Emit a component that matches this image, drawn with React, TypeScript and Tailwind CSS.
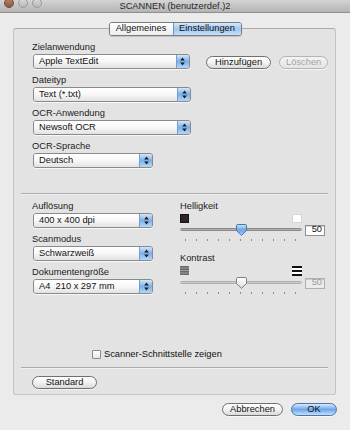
import React from "react";

function Arrows() {
	return (
		<svg width="5" height="9" viewBox="0 0 5 9" aria-hidden="true">
			<path d="M2.5 0.5 L4.8 3.4 L0.2 3.4 Z" fill="#1c1c1c" />
			<path d="M2.5 8.5 L4.8 5.6 L0.2 5.6 Z" fill="#1c1c1c" />
		</svg>
	);
}

function Popup({ value, className }: { value: string; className: string }) {
	return (
		<div
			className={`ml-[1px] flex h-[15px] overflow-hidden rounded-[3px] border border-[#8a8a8a] shadow-[0_1px_0_rgba(255,255,255,0.7)] ${className}`}
		>
			<div className="flex flex-1 items-center bg-gradient-to-b from-white via-[#f7f7f7] to-[#e2e2e2] pl-[5px] text-[#111]">
				{value}
			</div>
			<div className="flex w-[13px] items-center justify-center border-l border-[#7a9cc6] bg-gradient-to-b from-[#d3e6fa] via-[#79b0ea] to-[#b5d8fb]">
				<Arrows />
			</div>
		</div>
	);
}

function Pill({
	children,
	className,
	disabled,
	primary,
}: {
	children: React.ReactNode;
	className: string;
	disabled?: boolean;
	primary?: boolean;
}) {
	const look = primary
		? "border-[#4f74a6] bg-gradient-to-b from-[#dbeafc] via-[#6ea7e8] to-[#c2e1ff] text-[#111]"
		: disabled
			? "border-[#b4b4b4] bg-gradient-to-b from-[#f4f4f4] to-[#e4e4e4] text-[#a3a3a3]"
			: "border-[#707070] bg-gradient-to-b from-white via-[#f2f2f2] to-[#dadada] text-[#111]";
	return (
		<div
			className={`flex h-[13px] items-center justify-center rounded-full border leading-none shadow-[0_1px_0_rgba(255,255,255,0.6)] ${look} ${className}`}
		>
			{children}
		</div>
	);
}

function Label({ children, className = "" }: { children: React.ReactNode; className?: string }) {
	return <div className={`h-[11px] leading-[11px] text-[#1a1a1a] ${className}`}>{children}</div>;
}

function Separator({ className = "" }: { className?: string }) {
	return <div className={`h-[2px] border-t border-[#acacac] bg-[#f1f1f1] ${className}`} />;
}

function Thumb({ blue }: { blue: boolean }) {
	return (
		<svg width="11" height="12" viewBox="0 0 11 12" aria-hidden="true">
			<defs>
				<linearGradient id={blue ? "tb" : "tw"} x1="0" y1="0" x2="0" y2="1">
					<stop offset="0" stopColor={blue ? "#cfe4fa" : "#ffffff"} />
					<stop offset="0.5" stopColor={blue ? "#6aa6e8" : "#f0f0f0"} />
					<stop offset="1" stopColor={blue ? "#a9d0f8" : "#d8d8d8"} />
				</linearGradient>
			</defs>
			<path
				d="M1.8 0.5 H9.2 A1.3 1.3 0 0 1 10.5 1.8 V6.6 L5.5 11.3 L0.5 6.6 V1.8 A1.3 1.3 0 0 1 1.8 0.5 Z"
				fill={`url(#${blue ? "tb" : "tw"})`}
				stroke={blue ? "#4d74a3" : "#7d7d7d"}
				strokeWidth="1"
			/>
		</svg>
	);
}

function Slider({ blue, disabled }: { blue: boolean; disabled?: boolean }) {
	return (
		<div className="flex flex-col">
			<div className="mt-[1px] flex h-[12px] items-center">
				<div className="relative h-[12px] w-[122px]">
					<div
						className={`mt-[4px] h-[3px] rounded-full border ${
							disabled
								? "border-[#b0b0b0] bg-[#c9c9c9]"
								: "border-[#8a8a8a] bg-gradient-to-b from-[#8f8f8f] to-[#cdcdcd]"
						}`}
					/>
					<div className="absolute left-[56px] top-0">
						<Thumb blue={blue} />
					</div>
				</div>
				<div
					className={`ml-[3px] flex h-[11px] w-[20px] items-center justify-end border pr-[2px] shadow-[inset_0_1px_1px_rgba(0,0,0,0.15)] ${
						disabled ? "border-[#b0b0b0] bg-[#ececec] text-[#9a9a9a]" : "border-[#8e8e8e] bg-white text-[#111]"
					}`}
				>
					50
				</div>
			</div>
			<div className="mt-[3px] flex h-[2px] gap-[10px] pl-[5px]">
				{Array.from({ length: 11 }).map((_, i) => (
					<div key={i} className="h-[2px] w-[1px] bg-[#8f8f8f]" />
				))}
			</div>
		</div>
	);
}

export default function App() {
	return (
		<div className="flex h-[430px] w-[350px] flex-col overflow-hidden bg-[#ebebeb] font-['Liberation_Sans',Arial,sans-serif] text-[9.3px]">
			{/* title bar */}
			<div className="grid h-[13px] grid-cols-[60px_1fr_60px] border-b border-[#8f8f8f] bg-gradient-to-b from-[#d4d4d4] to-[#b4b4b4]">
				<div className="-mt-[2px] flex gap-[4px] pl-[4px]">
					<div className="h-[10px] w-[10px] rounded-full border border-[#6d4a38] bg-gradient-to-b from-[#b88264] to-[#8d5a42]" />
					<div className="h-[10px] w-[10px] rounded-full border border-[#9a9a9a] bg-gradient-to-b from-[#d9d9d9] to-[#b9b9b9]" />
					<div className="h-[10px] w-[10px] rounded-full border border-[#9a9a9a] bg-gradient-to-b from-[#d9d9d9] to-[#b9b9b9]" />
				</div>
				<div className="text-center leading-[12px] text-[#2a2a2a]">SCANNEN (benutzerdef.)2</div>
				<div />
			</div>

			{/* tabs */}
			<div className="relative z-10 mt-[9px] flex justify-center">
				<div className="flex h-[14px] overflow-hidden rounded-[3px] border border-[#7c7c7c] shadow-[0_1px_1px_rgba(0,0,0,0.15)]">
					<div className="flex w-[63px] items-center justify-center bg-gradient-to-b from-white to-[#ececec] text-[#111]">
						Allgemeines
					</div>
					<div className="flex w-[68px] items-center justify-center border-l border-[#6f8fb8] bg-gradient-to-b from-[#d7e8fb] via-[#9cc6f2] to-[#c7e1fb] text-[#111]">
						Einstellungen
					</div>
				</div>
			</div>

			{/* group box */}
			<div className="-mt-[8px] ml-[13px] flex h-[367px] w-[323px] flex-col rounded-[3px] border border-[#c4c4c4] border-t-[#aaaaaa] bg-[#e3e3e3] px-[7px]">
				<div className="flex flex-col pl-[11px] pt-[13px]">
					<Label>Zielanwendung</Label>
					<div className="mt-[1px] flex items-center">
						<Popup value="Apple TextEdit" className="w-[158px]" />
						<Pill className="ml-[16px] mt-[2px] w-[66px]">Hinzufügen</Pill>
						<Pill className="ml-[8px] mt-[2px] w-[49px]" disabled>
							Löschen
						</Pill>
					</div>
					<Label className="mt-[6px]">Dateityp</Label>
					<Popup value="Text (*.txt)" className="mt-[1px] w-[158px]" />
					<Label className="mt-[6px]">OCR-Anwendung</Label>
					<Popup value="Newsoft OCR" className="mt-[1px] w-[158px]" />
					<Label className="mt-[6px]">OCR-Sprache</Label>
					<Popup value="Deutsch" className="mt-[1px] w-[120px]" />
				</div>

				<Separator className="mt-[25px]" />

				<div className="mt-[6px] flex pl-[11px]">
					<div className="flex w-[148px] flex-col">
						<Label>Auflösung</Label>
						<Popup value="400 x 400 dpi" className="mt-[1px] w-[120px]" />
						<Label className="mt-[6px]">Scanmodus</Label>
						<Popup value="Schwarzweiß" className="mt-[1px] w-[120px]" />
						<Label className="mt-[6px]">Dokumentengröße</Label>
						<Popup value="A4  210 x 297 mm" className="mt-[1px] w-[120px] whitespace-pre" />
					</div>
					<div className="flex flex-col">
						<Label>Helligkeit</Label>
						<div className="mt-[2px] flex h-[9px] w-[122px] justify-between">
							<div className="h-[9px] w-[9px] border border-[#1a1416] bg-[#2c2426]" />
							<div className="h-[9px] w-[10px] border border-[#d6d6d6] bg-white" />
						</div>
						<Slider blue />
						<Label className="mt-[12px]">Kontrast</Label>
						<div className="mt-[2px] flex h-[10px] w-[122px] items-start justify-between">
							<svg width="9" height="9" viewBox="0 0 9 9" aria-hidden="true">
								<rect x="0" y="0" width="9" height="9" fill="#9a9a9a" />
								<rect x="0" y="0" width="9" height="1.5" fill="#6a6a6a" />
								<rect x="0" y="2.5" width="9" height="1.5" fill="#6a6a6a" />
								<rect x="0" y="5" width="9" height="1.5" fill="#6a6a6a" />
								<rect x="0" y="7.5" width="9" height="1.5" fill="#6a6a6a" />
							</svg>
							<svg width="10" height="10" viewBox="0 0 10 10" aria-hidden="true">
								<rect x="0" y="0" width="10" height="10" fill="#ffffff" />
								<rect x="0" y="0" width="10" height="2" fill="#111" />
								<rect x="0" y="4" width="10" height="2" fill="#111" />
								<rect x="0" y="8" width="10" height="2" fill="#111" />
							</svg>
						</div>
						<Slider blue={false} disabled />
					</div>
				</div>

				<div className="ml-[71px] mt-[55px] flex h-[11px] items-center">
					<div className="h-[9px] w-[9px] rounded-[1px] border border-[#8a8a8a] bg-gradient-to-b from-white to-[#e6e6e6]" />
					<span className="ml-[3px] text-[#111]">Scanner-Schnittstelle zeigen</span>
				</div>

				<Separator className="mt-[7px]" />

				<div className="mt-[7px] pl-[11px]">
					<Pill className="w-[65px]">Standard</Pill>
				</div>
			</div>

			{/* footer buttons */}
			<div className="mt-[8px] flex justify-end gap-[8px] pr-[13px]">
				<Pill className="w-[61px]">Abbrechen</Pill>
				<Pill className="w-[46px]" primary>
					OK
				</Pill>
			</div>
		</div>
	);
}
